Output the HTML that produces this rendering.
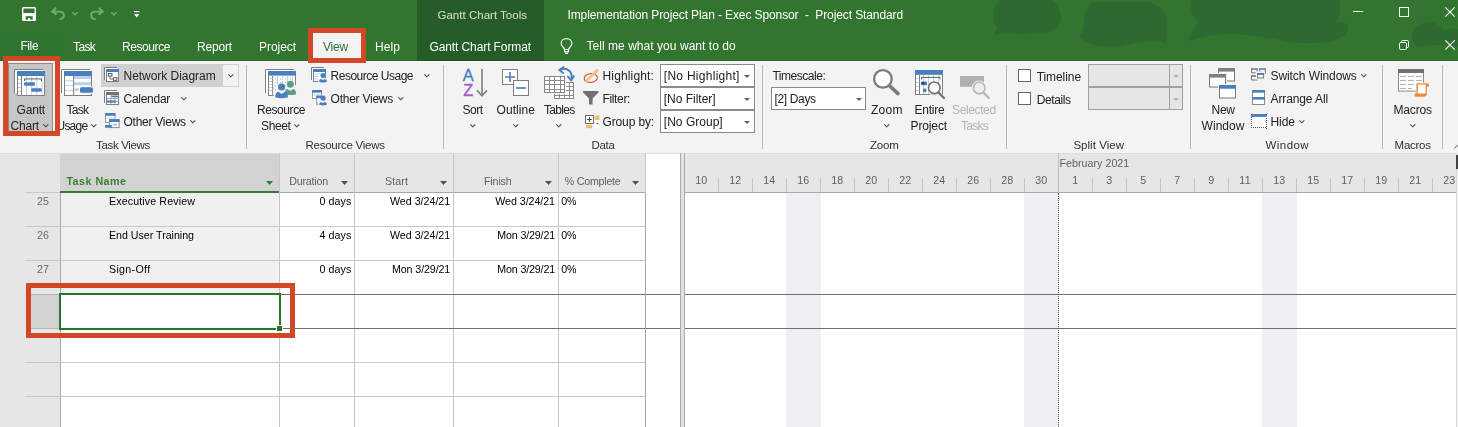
<!DOCTYPE html>
<html><head><meta charset="utf-8"><title>Project</title>
<style>
html,body{margin:0;padding:0}
body{width:1458px;height:427px;overflow:hidden;position:relative;background:#fff;font-family:"Liberation Sans",sans-serif}
.t{position:absolute;white-space:pre;font-family:"Liberation Sans",sans-serif}
#tx{position:absolute;left:0;top:0;width:1458px;height:427px;will-change:transform}
.b{position:absolute;box-sizing:border-box}
svg{position:absolute;overflow:visible}
</style></head><body>
<div class="b" style="left:0px;top:0px;width:1458px;height:61px;background:#31752f;"></div>
<div class="b" style="left:0px;top:31px;width:58px;height:30px;background:#2f7430;"></div>
<div class="b" style="left:417px;top:0px;width:127px;height:61px;background:#265c27;"></div>
<div class="b" style="left:0px;top:61px;width:1458px;height:92px;background:#f3f3f3;"></div>
<div class="b" style="left:0px;top:60px;width:1458px;height:1px;background:#2a6c28;"></div>
<div class="b" style="left:417px;top:60px;width:127px;height:1px;background:#215423;"></div>
<div class="b" style="left:0px;top:61px;width:1458px;height:1px;background:#fbfbfb;"></div>
<div class="b" style="left:0px;top:152px;width:1458px;height:1px;background:#f3f3f3;"></div>
<div class="b" style="left:313px;top:33px;width:48px;height:28px;background:#f3f3f3;"></div>
<div class="b" style="left:0px;top:153px;width:1458px;height:274px;background:#ffffff;"></div>
<div class="b" style="left:0px;top:153px;width:60px;height:274px;background:#e6e6e6;"></div>
<div class="b" style="left:60px;top:153px;width:586px;height:39px;background:#e6e6e6;"></div>
<div class="b" style="left:60px;top:153px;width:220px;height:39px;background:#d2d2d2;"></div>
<div class="b" style="left:60px;top:191px;width:220px;height:2px;background:#2e7d32;"></div>
<div class="b" style="left:60px;top:193px;width:220px;height:101px;background:#f0f0f0;"></div>
<div class="b" style="left:685px;top:153px;width:771px;height:39px;background:#e6e6e6;"></div>
<div class="b" style="left:279px;top:192px;width:1177px;height:1px;background:#a8a8a8;"></div>
<div class="b" style="left:25px;top:192px;width:35px;height:1px;background:#c8c8c8;"></div>
<div class="b" style="left:0px;top:153px;width:1458px;height:1px;background:#dcdcdc;"></div>
<div class="b" style="left:786px;top:193px;width:35px;height:234px;background:#edf0f5;"></div>
<div class="b" style="left:1024px;top:193px;width:35px;height:234px;background:#edf0f5;"></div>
<div class="b" style="left:1262px;top:193px;width:35px;height:234px;background:#edf0f5;"></div>
<div class="b" style="left:279px;top:153px;width:1px;height:274px;background:#c6c6c6;"></div>
<div class="b" style="left:354px;top:153px;width:1px;height:274px;background:#c6c6c6;"></div>
<div class="b" style="left:453px;top:153px;width:1px;height:274px;background:#c6c6c6;"></div>
<div class="b" style="left:558px;top:153px;width:1px;height:274px;background:#c6c6c6;"></div>
<div class="b" style="left:645px;top:153px;width:1px;height:274px;background:#c6c6c6;"></div>
<div class="b" style="left:60px;top:193px;width:1px;height:234px;background:#a8a8a8;"></div>
<div class="b" style="left:25px;top:226px;width:621px;height:1px;background:#c8c8c8;"></div>
<div class="b" style="left:25px;top:260px;width:621px;height:1px;background:#c8c8c8;"></div>
<div class="b" style="left:25px;top:362px;width:621px;height:1px;background:#c8c8c8;"></div>
<div class="b" style="left:25px;top:396px;width:621px;height:1px;background:#c8c8c8;"></div>
<div class="b" style="left:61px;top:294px;width:1395px;height:1px;background:#6e6e6e;"></div>
<div class="b" style="left:61px;top:328px;width:1395px;height:1px;background:#6e6e6e;"></div>
<div class="b" style="left:27px;top:294px;width:33px;height:1px;background:#b4b4b4;"></div>
<div class="b" style="left:27px;top:328px;width:33px;height:1px;background:#b4b4b4;"></div>
<div class="b" style="left:31px;top:295px;width:29px;height:33px;background:#d2d2d2;"></div>
<div class="b" style="left:680px;top:153px;width:5px;height:274px;background:#e2e2e2;border-left:1px solid #ababab;border-right:1px solid #ababab;"></div>
<div class="b" style="left:646px;top:154px;width:34px;height:273px;background:#ffffff;"></div>
<div class="b" style="left:645px;top:193px;width:1px;height:234px;background:#a6a6a6;"></div>
<div class="b" style="left:646px;top:294px;width:34px;height:1px;background:#6e6e6e;"></div>
<div class="b" style="left:646px;top:328px;width:34px;height:1px;background:#6e6e6e;"></div>
<div class="b" style="left:718px;top:178px;width:1px;height:14px;background:#c4c4c4;"></div>
<div class="b" style="left:752px;top:178px;width:1px;height:14px;background:#c4c4c4;"></div>
<div class="b" style="left:786px;top:178px;width:1px;height:14px;background:#c4c4c4;"></div>
<div class="b" style="left:820px;top:178px;width:1px;height:14px;background:#c4c4c4;"></div>
<div class="b" style="left:854px;top:178px;width:1px;height:14px;background:#c4c4c4;"></div>
<div class="b" style="left:888px;top:178px;width:1px;height:14px;background:#c4c4c4;"></div>
<div class="b" style="left:922px;top:178px;width:1px;height:14px;background:#c4c4c4;"></div>
<div class="b" style="left:956px;top:178px;width:1px;height:14px;background:#c4c4c4;"></div>
<div class="b" style="left:990px;top:178px;width:1px;height:14px;background:#c4c4c4;"></div>
<div class="b" style="left:1024px;top:178px;width:1px;height:14px;background:#c4c4c4;"></div>
<div class="b" style="left:1092px;top:178px;width:1px;height:14px;background:#c4c4c4;"></div>
<div class="b" style="left:1126px;top:178px;width:1px;height:14px;background:#c4c4c4;"></div>
<div class="b" style="left:1160px;top:178px;width:1px;height:14px;background:#c4c4c4;"></div>
<div class="b" style="left:1194px;top:178px;width:1px;height:14px;background:#c4c4c4;"></div>
<div class="b" style="left:1228px;top:178px;width:1px;height:14px;background:#c4c4c4;"></div>
<div class="b" style="left:1262px;top:178px;width:1px;height:14px;background:#c4c4c4;"></div>
<div class="b" style="left:1296px;top:178px;width:1px;height:14px;background:#c4c4c4;"></div>
<div class="b" style="left:1330px;top:178px;width:1px;height:14px;background:#c4c4c4;"></div>
<div class="b" style="left:1364px;top:178px;width:1px;height:14px;background:#c4c4c4;"></div>
<div class="b" style="left:1398px;top:178px;width:1px;height:14px;background:#c4c4c4;"></div>
<div class="b" style="left:1432px;top:178px;width:1px;height:14px;background:#c4c4c4;"></div>
<div class="b" style="left:1058px;top:153px;width:1px;height:40px;background:#bcbcbc;"></div>
<div class="b" style="left:1058px;top:193px;width:0px;height:234px;border-left:1px dotted #555;"></div>
<div class="b" style="left:1456px;top:153px;width:1px;height:274px;background:#d8d8d8;"></div>
<div class="b" style="left:1457px;top:153px;width:1px;height:274px;background:#f3f3f3;"></div>
<div class="b" style="left:1456px;top:155px;width:2px;height:14px;background:#444;"></div>
<div class="b" style="left:59px;top:293px;width:222px;height:37px;border:2px solid #27752b;background:#fff;"></div>
<div class="b" style="left:277px;top:326px;width:5px;height:5px;background:#27752b;border:1px solid #fff;box-sizing:content-box;left:276px;top:325px;"></div>
<div class="b" style="left:245px;top:65px;width:3px;height:84px;background:#f8f8f8;"></div>
<div class="b" style="left:246px;top:65px;width:1px;height:84px;background:#b4b4b4;"></div>
<div class="b" style="left:442px;top:65px;width:3px;height:84px;background:#f8f8f8;"></div>
<div class="b" style="left:443px;top:65px;width:1px;height:84px;background:#b4b4b4;"></div>
<div class="b" style="left:761px;top:65px;width:3px;height:84px;background:#f8f8f8;"></div>
<div class="b" style="left:762px;top:65px;width:1px;height:84px;background:#b4b4b4;"></div>
<div class="b" style="left:1005px;top:65px;width:3px;height:84px;background:#f8f8f8;"></div>
<div class="b" style="left:1006px;top:65px;width:1px;height:84px;background:#b4b4b4;"></div>
<div class="b" style="left:1189px;top:65px;width:3px;height:84px;background:#f8f8f8;"></div>
<div class="b" style="left:1190px;top:65px;width:1px;height:84px;background:#b4b4b4;"></div>
<div class="b" style="left:1381px;top:65px;width:3px;height:84px;background:#f8f8f8;"></div>
<div class="b" style="left:1382px;top:65px;width:1px;height:84px;background:#b4b4b4;"></div>
<div class="b" style="left:1441px;top:65px;width:3px;height:84px;background:#f8f8f8;"></div>
<div class="b" style="left:1442px;top:65px;width:1px;height:84px;background:#b4b4b4;"></div>
<div class="b" style="left:8px;top:63px;width:45px;height:68px;background:#c6c6c6;border:1px solid #8c8c8c;border-bottom:none;"></div>
<div class="b" style="left:101px;top:64px;width:122px;height:23px;background:#d0d0d0;"></div>
<div class="b" style="left:222px;top:64px;width:17px;height:23px;background:#f2f2f2;border:1px solid #d0d0d0;"></div>
<div class="b" style="left:660px;top:64px;width:95px;height:23px;background:#fff;border:1px solid #8a8a8a;"></div>
<div class="b" style="left:660px;top:87px;width:95px;height:23px;background:#fff;border:1px solid #8a8a8a;"></div>
<div class="b" style="left:660px;top:110px;width:95px;height:23px;background:#fff;border:1px solid #8a8a8a;"></div>
<div class="b" style="left:771px;top:87px;width:95px;height:23px;background:#fff;border:1px solid #8a8a8a;"></div>
<div class="b" style="left:1088px;top:64px;width:95px;height:23px;background:#e6e6e6;border:1px solid #a0a0a0;"></div>
<div class="b" style="left:1169px;top:65px;width:1px;height:21px;background:#a0a0a0;"></div>
<div class="b" style="left:1088px;top:87px;width:95px;height:23px;background:#e6e6e6;border:1px solid #a0a0a0;"></div>
<div class="b" style="left:1169px;top:88px;width:1px;height:21px;background:#a0a0a0;"></div>
<div class="b" style="left:1018px;top:69px;width:13px;height:13px;background:#fff;border:1px solid #666;"></div>
<div class="b" style="left:1018px;top:92px;width:13px;height:13px;background:#fff;border:1px solid #666;"></div>
<svg style="left:0;top:0" width="1458" height="61" viewBox="0 0 1458 61"><defs><filter id="bl" x="-5%" y="-20%" width="110%" height="140%"><feGaussianBlur stdDeviation="0.7"/></filter></defs><g fill="#2e6930" filter="url(#bl)"><path d="M1000 0 H1052 Q1062 8 1061 20 Q1058 32 1040 33 Q1020 35 1008 33 Q1000 33 993 35 L997 27 Q992 20 994 12 Q995 4 1000 0 Z"/><path d="M1092 2 H1150 Q1166 8 1167 22 Q1168 34 1166 45 L1160 40 Q1140 42 1120 46 Q1098 48 1086 42 Q1078 38 1080 34 Q1084 30 1084 22 Q1084 8 1092 2 Z"/><path d="M1192 0 H1340 Q1341 12 1337 22 Q1346 22 1349 26 Q1348 36 1332 41 Q1310 45 1290 42 Q1262 36 1236 34 Q1210 33 1189 41 L1190 36 L1198 22 Q1188 12 1192 0 Z"/><path d="M1458 29 Q1450 27 1444 31 Q1438 21 1426 22.5 Q1413 25 1412 36 Q1412 44 1420 46.5 Q1432 44.5 1440 45 Q1450 46 1458 46.5 Z"/></g></svg>
<svg style="left:22px;top:7px" width="14" height="14" viewBox="0 0 14 14"><rect x="0.7" y="0.7" width="12.6" height="12.6" rx="0.8" fill="none" stroke="#fff" stroke-width="1.4"/><rect x="1" y="6" width="12" height="7.3" fill="#fff"/><rect x="3.7" y="9.2" width="7" height="3.5" fill="#31752f"/><rect x="6.2" y="11" width="2" height="2.3" fill="#fff"/></svg>
<svg style="left:51px;top:7px" width="14" height="13" viewBox="0 0 14 13"><path d="M5.2 0.8 L1.2 4.6 L5.6 7.6" fill="none" stroke="#74aa72" stroke-width="1.9"/><path d="M1.8 4.6 H9 Q13.2 5 13 8.6 Q12.6 11.8 8.4 12.4" fill="none" stroke="#74aa72" stroke-width="1.9"/></svg>
<svg style="left:72.2px;top:11.65px" width="5.8" height="3.1" viewBox="0 0 5.8 3.1"><path d="M0.3 0.3 L2.9 2.8 L5.5 0.3" fill="none" stroke="#74aa72" stroke-width="1.5"/></svg>
<svg style="left:90px;top:7px" width="14" height="13" viewBox="0 0 14 13"><path d="M8.8 0.8 L12.8 4.6 L8.4 7.6" fill="none" stroke="#74aa72" stroke-width="1.9"/><path d="M12.2 4.6 H5 Q0.8 5 1 8.6 Q1.4 11.8 5.6 12.4" fill="none" stroke="#74aa72" stroke-width="1.9"/></svg>
<svg style="left:111px;top:11.65px" width="5.8" height="3.1" viewBox="0 0 5.8 3.1"><path d="M0.3 0.3 L2.9 2.8 L5.5 0.3" fill="none" stroke="#74aa72" stroke-width="1.5"/></svg>
<svg style="left:134px;top:11px" width="5.4" height="6.4" viewBox="0 0 5.4 6.4"><rect x="0" y="0" width="5.4" height="1.2" fill="#fff"/><path d="M0 3 H5.4 L2.7 6.4 Z" fill="#fff"/></svg>
<svg style="left:1353px;top:11px" width="10" height="1" viewBox="0 0 10 1"><rect width="10" height="1" fill="#fff"/></svg>
<svg style="left:1399px;top:7px" width="10" height="10" viewBox="0 0 10 10"><rect x="0.5" y="0.5" width="9" height="9" fill="none" stroke="#fff" stroke-width="1"/></svg>
<svg style="left:1445px;top:7px" width="10" height="10" viewBox="0 0 10 10"><path d="M0.3 0.3 L9.7 9.7 M9.7 0.3 L0.3 9.7" stroke="#fff" stroke-width="1.1"/></svg>
<svg style="left:1399px;top:40px" width="10" height="10" viewBox="0 0 10 10"><rect x="0.5" y="2.5" width="7" height="7" rx="1.2" fill="none" stroke="#fff" stroke-width="1"/><path d="M2.5 2.2 V1.6 Q2.5 0.5 3.6 0.5 H8.4 Q9.5 0.5 9.5 1.6 V6.4 Q9.5 7.5 8.4 7.5 H7.8" fill="none" stroke="#fff" stroke-width="1"/></svg>
<svg style="left:1445px;top:40px" width="10" height="10" viewBox="0 0 10 10"><path d="M0.3 0.3 L9.7 9.7 M9.7 0.3 L0.3 9.7" stroke="#fff" stroke-width="1.1"/></svg>
<svg style="left:560px;top:38px" width="13" height="16" viewBox="0 0 13 16"><path d="M4.5 11.5 C4.5 9.3 1.1 8.5 1.1 5.6 C1.1 2.6 3.5 0.6 6.5 0.6 C9.5 0.6 11.9 2.6 11.9 5.6 C11.9 8.5 8.6 9.3 8.6 11.5 Z" fill="none" stroke="#fff" stroke-width="1.15"/><path d="M4.5 11.5 V13.6 H8.6 V11.5 M5 15.4 H8.1" fill="none" stroke="#fff" stroke-width="1.1"/></svg>
<svg style="left:14px;top:69px" width="31" height="27" viewBox="0 0 31 27"><path d="M0.5 24 V0.5 H29" fill="none" stroke="#7f7f7f" stroke-width="1"/><rect x="1" y="1" width="28" height="23" fill="#fff"/><rect x="3.5" y="2.5" width="27" height="24" fill="#fff" stroke="#7f7f7f" stroke-width="1"/><rect x="3" y="2" width="28" height="5" fill="#4a7fbe"/><g transform="translate(3,2)"><path d="M1 8.5 H4.5" stroke="#bcd0e8" stroke-width="1"/><path d="M1 12.5 H4.5" stroke="#bcd0e8" stroke-width="1"/><path d="M1 16.5 H4.5" stroke="#bcd0e8" stroke-width="1"/><path d="M1 20.5 H4.5" stroke="#bcd0e8" stroke-width="1"/><path d="M9.5 5 V24" stroke="#bcd0e8" stroke-width="1"/><path d="M14.7 5 V24" stroke="#bcd0e8" stroke-width="1"/><path d="M19.8 5 V24" stroke="#bcd0e8" stroke-width="1"/><path d="M25 5 V24" stroke="#bcd0e8" stroke-width="1"/><path d="M4.5 5 V24" stroke="#7f7f7f" stroke-width="1"/><path d="M7.5 10 V7.9 H24.5 V10" fill="none" stroke="#5a5a5a" stroke-width="1"/><rect x="7" y="11.2" width="11" height="3.6" rx="1.2" fill="#4a7fbe"/><rect x="14.2" y="17.2" width="10.6" height="3.6" rx="1.2" fill="#4a7fbe"/></g></svg>
<svg style="left:61px;top:69px" width="31" height="27" viewBox="0 0 31 27"><path d="M0.5 24 V0.5 H29" fill="none" stroke="#7f7f7f" stroke-width="1"/><rect x="1" y="1" width="28" height="23" fill="#fff"/><rect x="3.5" y="2.5" width="27" height="24" fill="#fff" stroke="#7f7f7f" stroke-width="1"/><rect x="3" y="2" width="28" height="5" fill="#4a7fbe"/><g transform="translate(3,2)"><path d="M1 9.8 H9" stroke="#bcd0e8" stroke-width="1"/><path d="M1 14.5 H9" stroke="#bcd0e8" stroke-width="1"/><path d="M1 19.5 H9" stroke="#bcd0e8" stroke-width="1"/><rect x="10" y="5" width="17" height="3" fill="#bcd0e8"/><rect x="10" y="11.2" width="17" height="3" fill="#bcd0e8"/><rect x="10.3" y="17.3" width="4.5" height="2.7" fill="#bcd0e8"/><path d="M9.6 5 V24" stroke="#7f7f7f" stroke-width="1"/><rect x="15.6" y="15.4" width="13.6" height="7.4" fill="#f3f3f3"/><rect x="16" y="16.2" width="13" height="5.6" rx="1.5" fill="#4a7fbe"/></g></svg>
<svg style="left:104px;top:67px" width="15" height="15" viewBox="0 0 15 15"><path d="M0.5 13 V0.5 H13" fill="none" stroke="#7f7f7f" stroke-width="1"/><rect x="1" y="1" width="12" height="12" fill="#fff"/><rect x="2.5" y="2.5" width="12" height="12" fill="#fff" stroke="#7f7f7f" stroke-width="1"/><rect x="2" y="2" width="13" height="3" fill="#4a7fbe"/><g transform="translate(2,2)"><rect x="2.3" y="4.5" width="3.6" height="2.6" fill="#fff" stroke="#5a5a5a" stroke-width="1"/><rect x="7.3" y="8.7" width="3.6" height="2.6" fill="#fff" stroke="#5a5a5a" stroke-width="1"/><path d="M4 7.2 V10 H7" fill="none" stroke="#5a5a5a" stroke-width="0.9"/></g></svg>
<svg style="left:104px;top:90px" width="15" height="15" viewBox="0 0 15 15"><path d="M0.5 13 V0.5 H13" fill="none" stroke="#7f7f7f" stroke-width="1"/><rect x="1" y="1" width="12" height="12" fill="#fff"/><rect x="2.5" y="2.5" width="12" height="12" fill="#fff" stroke="#7f7f7f" stroke-width="1"/><rect x="2" y="2" width="13" height="3" fill="#727272"/><g transform="translate(2,2)"><path d="M5 3 V12 M9 3 V12 M1 6.5 H12 M1 9.5 H12" stroke="#9a9a9a" stroke-width="0.9" fill="none"/><rect x="5.5" y="3.6" width="7" height="1.6" fill="#4a7fbe"/><rect x="0.8" y="8.4" width="8.8" height="2.2" fill="#4a7fbe"/></g></svg>
<svg style="left:105px;top:113px" width="15" height="16" viewBox="0 0 15 16"><rect x="0.5" y="0.5" width="9.5" height="9" fill="#fff" stroke="#9a9a9a" stroke-width="1"/><rect x="0" y="0" width="10.5" height="2.8" fill="#4a7fbe"/><path d="M1.5 5 H9" stroke="#bcd0e8" stroke-width="1"/><rect x="4.6" y="6.6" width="9.5" height="8" fill="#fff" stroke="#8a8a8a" stroke-width="1"/><rect x="4.1" y="6.1" width="10.5" height="2.9" fill="#4a7fbe"/><rect x="7.5" y="10.5" width="4.5" height="2.5" fill="#bcd0e8"/><rect x="0" y="12" width="6.8" height="2.7" fill="#4a7fbe"/></svg>
<svg style="left:265px;top:69px" width="31" height="27" viewBox="0 0 31 27"><path d="M0.5 24 V0.5 H29" fill="none" stroke="#7f7f7f" stroke-width="1"/><rect x="1" y="1" width="28" height="23" fill="#fff"/><rect x="3.5" y="2.5" width="27" height="24" fill="#fff" stroke="#7f7f7f" stroke-width="1"/><rect x="3" y="2" width="28" height="4.6" fill="#4a7fbe"/><g transform="translate(3,2)"><path d="M1 7.5 H4.5" stroke="#bcd0e8" stroke-width="1"/><path d="M1 10.5 H4.5" stroke="#bcd0e8" stroke-width="1"/><path d="M1 13.5 H4.5" stroke="#bcd0e8" stroke-width="1"/><path d="M1 16.5 H4.5" stroke="#bcd0e8" stroke-width="1"/><path d="M1 19.5 H4.5" stroke="#bcd0e8" stroke-width="1"/><path d="M9.5 5 V14" stroke="#bcd0e8" stroke-width="1"/><path d="M14.5 5 V14" stroke="#bcd0e8" stroke-width="1"/><path d="M19.5 5 V14" stroke="#bcd0e8" stroke-width="1"/><path d="M24.5 5 V14" stroke="#bcd0e8" stroke-width="1"/><rect x="7" y="7.5" width="0.9" height="0.9" fill="#8a8a8a"/><rect x="7" y="11" width="0.9" height="0.9" fill="#8a8a8a"/><rect x="7" y="14.5" width="0.9" height="0.9" fill="#8a8a8a"/><rect x="7" y="18.5" width="0.9" height="0.9" fill="#8a8a8a"/><rect x="12" y="7.5" width="0.9" height="0.9" fill="#8a8a8a"/><rect x="12" y="11" width="0.9" height="0.9" fill="#8a8a8a"/><rect x="12" y="14.5" width="0.9" height="0.9" fill="#8a8a8a"/><rect x="12" y="18.5" width="0.9" height="0.9" fill="#8a8a8a"/><rect x="17" y="7.5" width="0.9" height="0.9" fill="#8a8a8a"/><rect x="17" y="11" width="0.9" height="0.9" fill="#8a8a8a"/><rect x="17" y="14.5" width="0.9" height="0.9" fill="#8a8a8a"/><rect x="17" y="18.5" width="0.9" height="0.9" fill="#8a8a8a"/><rect x="22" y="7.5" width="0.9" height="0.9" fill="#8a8a8a"/><rect x="22" y="11" width="0.9" height="0.9" fill="#8a8a8a"/><rect x="22" y="14.5" width="0.9" height="0.9" fill="#8a8a8a"/><rect x="22" y="18.5" width="0.9" height="0.9" fill="#8a8a8a"/><path d="M4.7 5 V24" stroke="#7f7f7f" stroke-width="1"/><rect x="6" y="12" width="23" height="15" fill="#fff" opacity="0"/></g></svg>
<svg style="left:268px;top:71px" width="30" height="28" viewBox="0 0 30 28"><rect x="5.5" y="19" width="23.5" height="7" fill="#f3f3f3"/><rect x="26.5" y="14" width="3" height="6" fill="#f3f3f3"/><circle cx="22.4" cy="13.2" r="3.5" fill="#5b9e84"/><path d="M16.65 23.5 Q16.65 18.3 19.525 17.9 L22.4 20.09 L25.275 17.9 Q28.15 18.3 28.15 23.5 L27.35 23.5 Q22.4 24.7 17.45 23.5 Z" fill="#5b9e84"/><circle cx="13.6" cy="16" r="3.6" fill="#4a7fbe"/><path d="M7.2 26.6 Q7.2 21.2 10.4 20.8 L13.6 23.08 L16.8 20.8 Q20 21.2 20 26.6 L19.2 26.6 Q13.6 27.8 8 26.6 Z" fill="#4a7fbe"/></svg>
<svg style="left:311px;top:67px" width="15" height="15" viewBox="0 0 15 15"><path d="M0.5 13 V0.5 H13" fill="none" stroke="#7f7f7f" stroke-width="1"/><rect x="1" y="1" width="12" height="12" fill="#fff"/><rect x="2.5" y="2.5" width="12" height="12" fill="#fff" stroke="#7f7f7f" stroke-width="1"/><rect x="2" y="2" width="13" height="3" fill="#4a7fbe"/><g transform="translate(2,2)"><path d="M1.5 5 H8 M1.5 7.5 H6 M1.5 10 H5" stroke="#bcd0e8" stroke-width="1"/></g></svg>
<svg style="left:317px;top:71px" width="12" height="13" viewBox="0 0 12 13"><rect x="1.2" y="7" width="9.6" height="5" fill="#f3f3f3"/><circle cx="6" cy="4.4" r="2.5" fill="#4a7fbe"/><path d="M2 10.9 Q2 8.5 4 8.1 L6 9.03 L8 8.1 Q10 8.5 10 10.9 L9.2 10.9 Q6 12.1 2.8 10.9 Z" fill="#4a7fbe"/></svg>
<svg style="left:312px;top:90px" width="16" height="16" viewBox="0 0 16 16"><rect x="0.5" y="0.5" width="9" height="8" fill="#fff" stroke="#9a9a9a" stroke-width="1"/><rect x="0" y="0" width="10" height="2.7" fill="#4a7fbe"/><path d="M1.5 4.6 H8.5" stroke="#bcd0e8" stroke-width="1"/><rect x="4.7" y="6.2" width="8" height="8" fill="#fff" stroke="#8a8a8a" stroke-width="1"/><rect x="4.2" y="5.7" width="5" height="2.5" fill="#4a7fbe"/><rect x="6.2" y="10.5" width="9.6" height="5" fill="#f3f3f3"/><circle cx="11" cy="8.3" r="2.5" fill="#4a7fbe"/><path d="M7 14.8 Q7 12.4 9 12 L11 12.93 L13 12 Q15 12.4 15 14.8 L14.2 14.8 Q11 16 7.8 14.8 Z" fill="#4a7fbe"/></svg>
<svg style="left:463px;top:69px" width="25" height="28" viewBox="0 0 25 28"><text x="-0.2" y="11.9" font-family="Liberation Sans, sans-serif" font-size="16.4" fill="#4a7fbe" stroke="#4a7fbe" stroke-width="0.35">A</text><text x="0.3" y="27.4" font-family="Liberation Sans, sans-serif" font-size="16.4" fill="#9a5fc0" stroke="#9a5fc0" stroke-width="0.35">Z</text><path d="M19 0 V26.4 M14 21.4 L19 26.8 L24 21.4" fill="none" stroke="#7f7f7f" stroke-width="1.6"/></svg>
<svg style="left:502px;top:69px" width="27" height="27" viewBox="0 0 27 27"><rect x="0.5" y="0.5" width="15" height="15" fill="#fff" stroke="#7f7f7f" stroke-width="1"/><path d="M3 8 H13 M8 3 V13" stroke="#4a7fbe" stroke-width="1.6"/><rect x="11.5" y="11.5" width="15" height="15" fill="#fff" stroke="#7f7f7f" stroke-width="1"/><path d="M14 19 H24" stroke="#4a7fbe" stroke-width="1.6"/></svg>
<svg style="left:544px;top:66px" width="31" height="33" viewBox="0 0 31 33"><rect x="10.5" y="16.5" width="19" height="16" fill="#fff" stroke="#8a8a8a" stroke-width="1"/><path d="M15.5 16 V33" stroke="#8a8a8a" stroke-width="1"/><path d="M20.5 16 V33" stroke="#8a8a8a" stroke-width="1"/><path d="M25.5 16 V33" stroke="#8a8a8a" stroke-width="1"/><path d="M10 20.5 H30" stroke="#8a8a8a" stroke-width="1"/><path d="M10 24.5 H30" stroke="#8a8a8a" stroke-width="1"/><path d="M10 29.5 H30" stroke="#8a8a8a" stroke-width="1"/><rect x="-1" y="9" width="23" height="19" fill="#f3f3f3"/><rect x="0.5" y="10.5" width="20" height="16" fill="#fff" stroke="#8a8a8a" stroke-width="1"/><path d="M5.5 10 V27" stroke="#8a8a8a" stroke-width="1"/><path d="M10.5 10 V27" stroke="#8a8a8a" stroke-width="1"/><path d="M16.5 10 V27" stroke="#8a8a8a" stroke-width="1"/><path d="M0 14.5 H21" stroke="#8a8a8a" stroke-width="1"/><path d="M0 18.5 H21" stroke="#8a8a8a" stroke-width="1"/><path d="M0 23.5 H21" stroke="#8a8a8a" stroke-width="1"/><path d="M16 4 Q22 0.8 26.2 5.6 Q28.4 9 27.4 13" fill="none" stroke="#4a7fbe" stroke-width="1.9"/><path d="M23.4 10 L27.2 14.4 L30.2 9.6" fill="none" stroke="#4a7fbe" stroke-width="1.9"/><path d="M20 0.8 L15.4 4 L19.8 7.4" fill="none" stroke="#4a7fbe" stroke-width="1.9"/></svg>
<svg style="left:583px;top:67px" width="17" height="17" viewBox="0 0 17 17"><ellipse cx="7.8" cy="11" rx="6.6" ry="4.4" fill="none" stroke="#d8593b" stroke-width="1.2" transform="rotate(-8 7.8 11)"/><path d="M2.2 13.6 L13.6 1.6 L16 3.8 L4.6 14.6 L1.6 15.2 Z" fill="#efc67a"/></svg>
<svg style="left:583px;top:91px" width="16" height="15" viewBox="0 0 16 15"><path d="M0 0 H15.6 V1.2 L9.6 7.4 V13.6 H6 V7.4 L0 1.2 Z" fill="#707070"/></svg>
<svg style="left:585px;top:115px" width="15" height="14" viewBox="0 0 15 14"><rect x="0.5" y="0.5" width="8" height="8" fill="#fff" stroke="#6a6a6a" stroke-width="1"/><path d="M2.2 4.5 H6.8 M4.5 2.2 V6.8" stroke="#444" stroke-width="1"/><rect x="10" y="0.5" width="4.4" height="4.4" fill="#f0bd62"/><rect x="10" y="5" width="4.4" height="8" fill="#fff"/><path d="M11.4 8.6 H13.4" stroke="#444" stroke-width="1"/><rect x="1" y="9.8" width="6.2" height="3.4" fill="#f0bd62"/></svg>
<svg style="left:872px;top:68px" width="30" height="30" viewBox="0 0 30 30"><circle cx="10.9" cy="10.9" r="8.8" fill="#fff" stroke="#7c7c7c" stroke-width="2.3"/><path d="M17.8 18 L26 25.6" stroke="#7c7c7c" stroke-width="3.7" stroke-linecap="round"/></svg>
<svg style="left:915px;top:70px" width="28" height="25" viewBox="0 0 28 25"><rect x="0.5" y="0.5" width="27" height="24" fill="#fff" stroke="#7f7f7f" stroke-width="1"/><rect x="0" y="0" width="28" height="4.8" fill="#4a7fbe"/><g transform="translate(0,0)"><path d="M1 8.5 H3.6" stroke="#bcd0e8" stroke-width="1"/><path d="M1 12.5 H3.6" stroke="#bcd0e8" stroke-width="1"/><path d="M1 16.5 H3.6" stroke="#bcd0e8" stroke-width="1"/><path d="M1 20.5 H3.6" stroke="#bcd0e8" stroke-width="1"/><path d="M8.5 5 V24" stroke="#bcd0e8" stroke-width="1"/><path d="M13.5 5 V24" stroke="#bcd0e8" stroke-width="1"/><path d="M18.5 5 V24" stroke="#bcd0e8" stroke-width="1"/><path d="M23.5 5 V24" stroke="#bcd0e8" stroke-width="1"/><path d="M4.5 5 V24" stroke="#7f7f7f" stroke-width="1"/><path d="M6.5 9.4 V7.4 H25 V9.4" fill="none" stroke="#5a5a5a" stroke-width="1"/><rect x="6" y="11.6" width="6" height="3.6" rx="1" fill="#4a7fbe"/><path d="M6.4 13.2 H9.6" stroke="#222" stroke-width="1.2"/><rect x="8" y="18.6" width="3.4" height="3.6" rx="1" fill="#4a7fbe"/></g></svg>
<svg style="left:926px;top:80px" width="20" height="20" viewBox="0 0 20 20"><rect x="4" y="14.2" width="13.6" height="2" fill="#f3f3f3"/><rect x="16.6" y="14" width="2" height="2" fill="#f3f3f3"/><circle cx="8.3" cy="7.8" r="5.8" fill="#fff" stroke="#747474" stroke-width="1.7"/><path d="M12.8 12.6 L18 18" stroke="#747474" stroke-width="2.4" stroke-linecap="round"/></svg>
<svg style="left:960px;top:76px" width="31" height="24" viewBox="0 0 31 24"><rect x="0" y="0" width="24" height="10.8" fill="#b1afb1"/><circle cx="19.2" cy="12" r="7.6" fill="#f3f3f3"/><circle cx="19.2" cy="12" r="5.8" fill="#f2ecf2" stroke="#b8b8b8" stroke-width="1.7"/><path d="M23.7 16.8 L28.8 22" stroke="#b8b8b8" stroke-width="2.4" stroke-linecap="round"/></svg>
<svg style="left:1209px;top:68px" width="28" height="31" viewBox="0 0 28 31"><rect x="9.5" y="0.5" width="16" height="12.5" fill="#fff" stroke="#777" stroke-width="1"/><rect x="9" y="0" width="17" height="3.6" fill="#808080"/><rect x="-1" y="5" width="19" height="15.5" fill="#f3f3f3"/><rect x="0.5" y="6.5" width="16" height="12.5" fill="#fff" stroke="#777" stroke-width="1"/><rect x="0" y="6" width="17" height="3.6" fill="#808080"/><rect x="9" y="16" width="19" height="15.5" fill="#f3f3f3"/><rect x="10.5" y="17.5" width="16" height="12.5" fill="#fff" stroke="#777" stroke-width="1"/><rect x="10" y="17" width="17" height="3.7" fill="#4a7fbe"/></svg>
<svg style="left:1251px;top:68px" width="15" height="13" viewBox="0 0 15 13"><path d="M0 1 H6.6 M8.3 1 H14.8" stroke="#777" stroke-width="1.6"/><path d="M0.5 0.4 V4.8 H4.6 M8.8 0.4 V3.6 M14.3 0.4 V5.8 M6.1 0.4 V3.4" fill="none" stroke="#777" stroke-width="1"/><path d="M0 8 H5" stroke="#777" stroke-width="1.6"/><path d="M0.5 7.4 V12 H6.6" fill="none" stroke="#777" stroke-width="1"/><rect x="5.2" y="4.2" width="8.8" height="7.1" fill="#f3f3f3"/><rect x="6.6" y="5.6" width="6" height="4.3" fill="#fff" stroke="#777" stroke-width="1"/><rect x="6.1" y="5.1" width="7" height="1.8" fill="#4a7fbe"/></svg>
<svg style="left:1252px;top:90px" width="13" height="15" viewBox="0 0 13 15"><rect x="0.5" y="0.5" width="12" height="14" fill="#fff" stroke="#8a8a8a" stroke-width="1"/><rect x="0" y="0" width="13" height="2.7" fill="#4a7fbe"/><rect x="0" y="7" width="13" height="2.6" fill="#4a7fbe"/></svg>
<svg style="left:1251px;top:114px" width="16" height="14" viewBox="0 0 16 14"><rect x="0" y="2" width="16" height="12" fill="#fff"/><rect x="0" y="3" width="1" height="1" fill="#555"/><rect x="15" y="4" width="1" height="1" fill="#555"/><rect x="0" y="5" width="1" height="1" fill="#555"/><rect x="15" y="6" width="1" height="1" fill="#555"/><rect x="0" y="7" width="1" height="1" fill="#555"/><rect x="15" y="8" width="1" height="1" fill="#555"/><rect x="0" y="9" width="1" height="1" fill="#555"/><rect x="15" y="10" width="1" height="1" fill="#555"/><rect x="0" y="11" width="1" height="1" fill="#555"/><rect x="15" y="12" width="1" height="1" fill="#555"/><rect x="0" y="13" width="1" height="1" fill="#555"/><rect x="15" y="14" width="1" height="1" fill="#555"/><rect x="0" y="13" width="1" height="1" fill="#555"/><rect x="2" y="13" width="1" height="1" fill="#555"/><rect x="4" y="13" width="1" height="1" fill="#555"/><rect x="6" y="13" width="1" height="1" fill="#555"/><rect x="8" y="13" width="1" height="1" fill="#555"/><rect x="10" y="13" width="1" height="1" fill="#555"/><rect x="12" y="13" width="1" height="1" fill="#555"/><rect x="14" y="13" width="1" height="1" fill="#555"/><rect x="0" y="0" width="16" height="2.9" fill="#4a7fbe"/></svg>
<svg style="left:1398px;top:69px" width="26" height="22.6" viewBox="0 0 26 22.6"><rect x="0.5" y="0.5" width="25" height="21.6" fill="#fff" stroke="#8a8a8a" stroke-width="1"/><rect x="0" y="0" width="26" height="4" fill="#727272"/><g transform="translate(0,0)"><path d="M2 7.5 H8 M10 7.5 H16 M18 7.5 H24 M2 11.5 H8 M10 11.5 H16 M18 11.5 H24 M2 15.5 H8 M10 15.5 H16 M2 19.5 H8 M10 19.5 H14" stroke="#b4b4b4" stroke-width="1"/></g></svg>
<svg style="left:1414px;top:83px" width="16" height="14" viewBox="0 0 16 14"><rect x="2" y="-0.5" width="11.8" height="11.5" fill="#f3f3f3"/><path d="M3.2 0.2 H13 Q15 0.2 15 2.2 V3.6 H12.9 V10.6 Q12.9 13.8 9.8 13.8 H2 Q0.2 13.6 0.4 11.4 Q0.6 10.4 2 10.4 H2.4 V1.2 Q2.4 0.2 3.2 0.2 Z" fill="#e98b3f"/><path d="M3.8 1.5 H11.6 V10 Q11.6 10.6 11 10.6 H3.8 Z" fill="#fff"/></svg>
<svg style="left:1454px;top:145px" width="4" height="4" viewBox="0 0 4 4"><path d="M0.3 3.4 L3.2 0.6 L6 3.4" fill="none" stroke="#555" stroke-width="1"/></svg>
<svg style="left:43.2px;top:124.05px" width="5.6" height="3.1" viewBox="0 0 5.6 3.1"><path d="M0.3 0.3 L2.8 2.8 L5.3 0.3" fill="none" stroke="#4c4c4c" stroke-width="1.15"/></svg>
<svg style="left:91.4px;top:124.05px" width="5.6" height="3.1" viewBox="0 0 5.6 3.1"><path d="M0.3 0.3 L2.8 2.8 L5.3 0.3" fill="none" stroke="#4c4c4c" stroke-width="1.15"/></svg>
<svg style="left:294.2px;top:124.05px" width="5.6" height="3.1" viewBox="0 0 5.6 3.1"><path d="M0.3 0.3 L2.8 2.8 L5.3 0.3" fill="none" stroke="#4c4c4c" stroke-width="1.15"/></svg>
<svg style="left:470.1px;top:124.05px" width="5.6" height="3.1" viewBox="0 0 5.6 3.1"><path d="M0.3 0.3 L2.8 2.8 L5.3 0.3" fill="none" stroke="#4c4c4c" stroke-width="1.15"/></svg>
<svg style="left:513.2px;top:124.05px" width="5.6" height="3.1" viewBox="0 0 5.6 3.1"><path d="M0.3 0.3 L2.8 2.8 L5.3 0.3" fill="none" stroke="#4c4c4c" stroke-width="1.15"/></svg>
<svg style="left:556.4px;top:124.05px" width="5.6" height="3.1" viewBox="0 0 5.6 3.1"><path d="M0.3 0.3 L2.8 2.8 L5.3 0.3" fill="none" stroke="#4c4c4c" stroke-width="1.15"/></svg>
<svg style="left:884.3px;top:124.05px" width="5.6" height="3.1" viewBox="0 0 5.6 3.1"><path d="M0.3 0.3 L2.8 2.8 L5.3 0.3" fill="none" stroke="#4c4c4c" stroke-width="1.15"/></svg>
<svg style="left:1410.1px;top:124.05px" width="5.6" height="3.1" viewBox="0 0 5.6 3.1"><path d="M0.3 0.3 L2.8 2.8 L5.3 0.3" fill="none" stroke="#4c4c4c" stroke-width="1.15"/></svg>
<svg style="left:181.3px;top:97.05px" width="5.6" height="3.1" viewBox="0 0 5.6 3.1"><path d="M0.3 0.3 L2.8 2.8 L5.3 0.3" fill="none" stroke="#4c4c4c" stroke-width="1.15"/></svg>
<svg style="left:190.4px;top:120.05px" width="5.6" height="3.1" viewBox="0 0 5.6 3.1"><path d="M0.3 0.3 L2.8 2.8 L5.3 0.3" fill="none" stroke="#4c4c4c" stroke-width="1.15"/></svg>
<svg style="left:424.2px;top:74.45px" width="5.6" height="3.1" viewBox="0 0 5.6 3.1"><path d="M0.3 0.3 L2.8 2.8 L5.3 0.3" fill="none" stroke="#4c4c4c" stroke-width="1.15"/></svg>
<svg style="left:397.5px;top:97.05px" width="5.6" height="3.1" viewBox="0 0 5.6 3.1"><path d="M0.3 0.3 L2.8 2.8 L5.3 0.3" fill="none" stroke="#4c4c4c" stroke-width="1.15"/></svg>
<svg style="left:1361.4px;top:74.45px" width="5.6" height="3.1" viewBox="0 0 5.6 3.1"><path d="M0.3 0.3 L2.8 2.8 L5.3 0.3" fill="none" stroke="#4c4c4c" stroke-width="1.15"/></svg>
<svg style="left:1299.4px;top:120.05px" width="5.6" height="3.1" viewBox="0 0 5.6 3.1"><path d="M0.3 0.3 L2.8 2.8 L5.3 0.3" fill="none" stroke="#4c4c4c" stroke-width="1.15"/></svg>
<svg style="left:227.5px;top:74.45px" width="5.6" height="3.1" viewBox="0 0 5.6 3.1"><path d="M0.3 0.3 L2.8 2.8 L5.3 0.3" fill="none" stroke="#4c4c4c" stroke-width="1.15"/></svg>
<svg style="left:744.3px;top:74.8px" width="6" height="3" viewBox="0 0 6 3"><path d="M0 0 L6 0 L3 3 Z" fill="#606060"/></svg>
<svg style="left:744.3px;top:97.8px" width="6" height="3" viewBox="0 0 6 3"><path d="M0 0 L6 0 L3 3 Z" fill="#606060"/></svg>
<svg style="left:744.3px;top:120.8px" width="6" height="3" viewBox="0 0 6 3"><path d="M0 0 L6 0 L3 3 Z" fill="#606060"/></svg>
<svg style="left:855.5px;top:97.8px" width="6" height="3" viewBox="0 0 6 3"><path d="M0 0 L6 0 L3 3 Z" fill="#606060"/></svg>
<svg style="left:1173px;top:74.8px" width="6" height="3" viewBox="0 0 6 3"><path d="M0 0 L6 0 L3 3 Z" fill="#b4b4b4"/></svg>
<svg style="left:1173px;top:97.8px" width="6" height="3" viewBox="0 0 6 3"><path d="M0 0 L6 0 L3 3 Z" fill="#b4b4b4"/></svg>
<svg style="left:265.5px;top:181px" width="7" height="4" viewBox="0 0 7 4"><path d="M0 0 L7 0 L3.5 4 Z" fill="#2e7d32"/></svg>
<svg style="left:340.9px;top:181px" width="7" height="4" viewBox="0 0 7 4"><path d="M0 0 L7 0 L3.5 4 Z" fill="#505050"/></svg>
<svg style="left:439.5px;top:181px" width="7" height="4" viewBox="0 0 7 4"><path d="M0 0 L7 0 L3.5 4 Z" fill="#505050"/></svg>
<svg style="left:544.9px;top:181px" width="7" height="4" viewBox="0 0 7 4"><path d="M0 0 L7 0 L3.5 4 Z" fill="#505050"/></svg>
<svg style="left:632.1px;top:181px" width="7" height="4" viewBox="0 0 7 4"><path d="M0 0 L7 0 L3.5 4 Z" fill="#505050"/></svg>
<div id="tx">
<span class="t" style="left:20.4px;top:38.0px;font-size:12px;line-height:16px;color:#ffffff;font-weight:400;letter-spacing:-0.386px">File</span>
<span class="t" style="left:73.0px;top:38.5px;font-size:12px;line-height:16px;color:#ffffff;font-weight:400;letter-spacing:-0.622px">Task</span>
<span class="t" style="left:122.0px;top:38.5px;font-size:12px;line-height:16px;color:#ffffff;font-weight:400;letter-spacing:-0.420px">Resource</span>
<span class="t" style="left:197.0px;top:38.5px;font-size:12px;line-height:16px;color:#ffffff;font-weight:400;letter-spacing:-0.172px">Report</span>
<span class="t" style="left:259.0px;top:38.5px;font-size:12px;line-height:16px;color:#ffffff;font-weight:400;letter-spacing:-0.051px">Project</span>
<span class="t" style="left:323.0px;top:38.5px;font-size:12px;line-height:16px;color:#2e7230;font-weight:400;letter-spacing:-0.199px">View</span>
<span class="t" style="left:375.0px;top:38.5px;font-size:12px;line-height:16px;color:#ffffff;font-weight:400;letter-spacing:0.078px">Help</span>
<span class="t" style="left:429.5px;top:38.5px;font-size:12px;line-height:16px;color:#ffffff;font-weight:400;letter-spacing:-0.104px">Gantt Chart Format</span>
<span class="t" style="left:586.4px;top:38.0px;font-size:12px;line-height:16px;color:#ffffff;font-weight:400;letter-spacing:0.049px">Tell me what you want to do</span>
<span class="t" style="left:437.5px;top:7.8px;font-size:11.5px;line-height:15.5px;color:#d4e2d4;font-weight:400;letter-spacing:0.013px">Gantt Chart Tools</span>
<span class="t" style="left:567.5px;top:7.0px;font-size:12px;line-height:16px;color:#ffffff;font-weight:400;letter-spacing:-0.106px">Implementation Project Plan - Exec Sponsor  -  Project Standard</span>
<span class="t" style="left:16.5px;top:101.5px;font-size:12px;line-height:16px;color:#222222;font-weight:400;letter-spacing:-0.172px">Gantt</span>
<span class="t" style="left:10.5px;top:117.5px;font-size:12px;line-height:16px;color:#222222;font-weight:400;letter-spacing:-0.169px">Chart</span>
<span class="t" style="left:66.5px;top:101.5px;font-size:12px;line-height:16px;color:#222222;font-weight:400;letter-spacing:-0.722px">Task</span>
<span class="t" style="left:56.5px;top:117.5px;font-size:12px;line-height:16px;color:#222222;font-weight:400;letter-spacing:-0.778px">Usage</span>
<span class="t" style="left:257.0px;top:101.5px;font-size:12px;line-height:16px;color:#222222;font-weight:400;letter-spacing:-0.420px">Resource</span>
<span class="t" style="left:261.0px;top:117.5px;font-size:12px;line-height:16px;color:#222222;font-weight:400;letter-spacing:-0.352px">Sheet</span>
<span class="t" style="left:462.4px;top:101.5px;font-size:12px;line-height:16px;color:#222222;font-weight:400;letter-spacing:-0.404px">Sort</span>
<span class="t" style="left:496.6px;top:101.5px;font-size:12px;line-height:16px;color:#222222;font-weight:400;letter-spacing:0.053px">Outline</span>
<span class="t" style="left:544.0px;top:101.5px;font-size:12px;line-height:16px;color:#222222;font-weight:400;letter-spacing:-0.665px">Tables</span>
<span class="t" style="left:871.0px;top:101.5px;font-size:12px;line-height:16px;color:#222222;font-weight:400;letter-spacing:0.253px">Zoom</span>
<span class="t" style="left:914.5px;top:101.5px;font-size:12px;line-height:16px;color:#222222;font-weight:400;letter-spacing:-0.227px">Entire</span>
<span class="t" style="left:910.5px;top:117.5px;font-size:12px;line-height:16px;color:#222222;font-weight:400;letter-spacing:-0.123px">Project</span>
<span class="t" style="left:952.0px;top:101.5px;font-size:12px;line-height:16px;color:#b4b4b4;font-weight:400;letter-spacing:-0.375px">Selected</span>
<span class="t" style="left:961.0px;top:117.5px;font-size:12px;line-height:16px;color:#b4b4b4;font-weight:400;letter-spacing:-0.738px">Tasks</span>
<span class="t" style="left:1211.6px;top:101.5px;font-size:12px;line-height:16px;color:#222222;font-weight:400;letter-spacing:-0.372px">New</span>
<span class="t" style="left:1201.6px;top:117.5px;font-size:12px;line-height:16px;color:#222222;font-weight:400;letter-spacing:0.035px">Window</span>
<span class="t" style="left:1393.5px;top:101.5px;font-size:12px;line-height:16px;color:#222222;font-weight:400;letter-spacing:-0.174px">Macros</span>
<span class="t" style="left:123.5px;top:68.0px;font-size:12px;line-height:16px;color:#222222;font-weight:400;letter-spacing:-0.040px">Network Diagram</span>
<span class="t" style="left:123.5px;top:91.0px;font-size:12px;line-height:16px;color:#222222;font-weight:400;letter-spacing:-0.275px">Calendar</span>
<span class="t" style="left:123.5px;top:113.5px;font-size:12px;line-height:16px;color:#222222;font-weight:400;letter-spacing:-0.258px">Other Views</span>
<span class="t" style="left:330.6px;top:68.0px;font-size:12px;line-height:16px;color:#222222;font-weight:400;letter-spacing:-0.499px">Resource Usage</span>
<span class="t" style="left:330.6px;top:91.0px;font-size:12px;line-height:16px;color:#222222;font-weight:400;letter-spacing:-0.249px">Other Views</span>
<span class="t" style="left:602.5px;top:68.0px;font-size:12px;line-height:16px;color:#222222;font-weight:400;letter-spacing:0.147px">Highlight:</span>
<span class="t" style="left:602.5px;top:91.0px;font-size:12px;line-height:16px;color:#222222;font-weight:400;letter-spacing:-0.357px">Filter:</span>
<span class="t" style="left:602.5px;top:113.5px;font-size:12px;line-height:16px;color:#222222;font-weight:400;letter-spacing:-0.134px">Group by:</span>
<span class="t" style="left:663.8px;top:68.0px;font-size:12px;line-height:16px;color:#222222;font-weight:400;letter-spacing:0.275px">[No Highlight]</span>
<span class="t" style="left:663.8px;top:91.0px;font-size:12px;line-height:16px;color:#222222;font-weight:400;letter-spacing:-0.020px">[No Filter]</span>
<span class="t" style="left:663.8px;top:113.5px;font-size:12px;line-height:16px;color:#222222;font-weight:400;letter-spacing:0.020px">[No Group]</span>
<span class="t" style="left:772.4px;top:68.0px;font-size:12px;line-height:16px;color:#222222;font-weight:400;letter-spacing:-0.468px">Timescale:</span>
<span class="t" style="left:774.6px;top:91.0px;font-size:12px;line-height:16px;color:#222222;font-weight:400;letter-spacing:-0.364px">[2] Days</span>
<span class="t" style="left:1036.7px;top:68.5px;font-size:12px;line-height:16px;color:#222222;font-weight:400;letter-spacing:-0.076px">Timeline</span>
<span class="t" style="left:1036.7px;top:91.5px;font-size:12px;line-height:16px;color:#222222;font-weight:400;letter-spacing:-0.384px">Details</span>
<span class="t" style="left:1270.5px;top:68.0px;font-size:12px;line-height:16px;color:#222222;font-weight:400;letter-spacing:-0.076px">Switch Windows</span>
<span class="t" style="left:1270.5px;top:91.0px;font-size:12px;line-height:16px;color:#222222;font-weight:400;letter-spacing:-0.109px">Arrange All</span>
<span class="t" style="left:1270.5px;top:113.5px;font-size:12px;line-height:16px;color:#222222;font-weight:400;letter-spacing:-0.047px">Hide</span>
<span class="t" style="left:96.0px;top:138.1px;font-size:11.5px;line-height:15.5px;color:#303030;font-weight:400;letter-spacing:-0.331px">Task Views</span>
<span class="t" style="left:305.5px;top:138.1px;font-size:11.5px;line-height:15.5px;color:#303030;font-weight:400;letter-spacing:-0.264px">Resource Views</span>
<span class="t" style="left:591.4px;top:138.1px;font-size:11.5px;line-height:15.5px;color:#303030;font-weight:400;letter-spacing:-0.299px">Data</span>
<span class="t" style="left:870.0px;top:138.1px;font-size:11.5px;line-height:15.5px;color:#303030;font-weight:400;letter-spacing:-0.227px">Zoom</span>
<span class="t" style="left:1073.4px;top:138.1px;font-size:11.5px;line-height:15.5px;color:#303030;font-weight:400;letter-spacing:0.030px">Split View</span>
<span class="t" style="left:1265.6px;top:138.1px;font-size:11.5px;line-height:15.5px;color:#303030;font-weight:400;letter-spacing:0.416px">Window</span>
<span class="t" style="left:1394.6px;top:138.1px;font-size:11.5px;line-height:15.5px;color:#303030;font-weight:400;letter-spacing:-0.267px">Macros</span>
<span class="t" style="left:66.4px;top:173.7px;font-size:10.67px;line-height:14.67px;color:#3a7e34;font-weight:700;letter-spacing:0.513px">Task Name</span>
<span class="t" style="left:289.3px;top:173.7px;font-size:10.67px;line-height:14.67px;color:#5f5f5f;font-weight:400;letter-spacing:-0.198px">Duration</span>
<span class="t" style="left:385.0px;top:173.7px;font-size:10.67px;line-height:14.67px;color:#5f5f5f;font-weight:400;letter-spacing:0.097px">Start</span>
<span class="t" style="left:484.0px;top:173.7px;font-size:10.67px;line-height:14.67px;color:#5f5f5f;font-weight:400;letter-spacing:-0.140px">Finish</span>
<span class="t" style="left:564.7px;top:173.7px;font-size:10.67px;line-height:14.67px;color:#5f5f5f;font-weight:400;letter-spacing:-0.215px">% Complete</span>
<span class="t" style="left:37.0px;top:193.7px;font-size:10.67px;line-height:14.67px;color:#6a6a6a;font-weight:400;letter-spacing:-0.030px">25</span>
<span class="t" style="left:109.0px;top:193.7px;font-size:10.67px;line-height:14.67px;color:#000;font-weight:400;letter-spacing:0.118px">Executive Review</span>
<span class="t" style="left:319.4px;top:193.7px;font-size:10.67px;line-height:14.67px;color:#000;font-weight:400;letter-spacing:0.116px">0 days</span>
<span class="t" style="left:390.0px;top:193.7px;font-size:10.67px;line-height:14.67px;color:#000;font-weight:400;letter-spacing:-0.003px">Wed 3/24/21</span>
<span class="t" style="left:495.3px;top:193.7px;font-size:10.67px;line-height:14.67px;color:#000;font-weight:400;letter-spacing:-0.049px">Wed 3/24/21</span>
<span class="t" style="left:561.2px;top:193.7px;font-size:10.67px;line-height:14.67px;color:#000;font-weight:400;letter-spacing:-0.203px">0%</span>
<span class="t" style="left:37.0px;top:227.7px;font-size:10.67px;line-height:14.67px;color:#6a6a6a;font-weight:400;letter-spacing:-0.030px">26</span>
<span class="t" style="left:109.0px;top:227.7px;font-size:10.67px;line-height:14.67px;color:#000;font-weight:400;letter-spacing:-0.017px">End User Training</span>
<span class="t" style="left:319.4px;top:227.7px;font-size:10.67px;line-height:14.67px;color:#000;font-weight:400;letter-spacing:0.116px">4 days</span>
<span class="t" style="left:390.0px;top:227.7px;font-size:10.67px;line-height:14.67px;color:#000;font-weight:400;letter-spacing:-0.003px">Wed 3/24/21</span>
<span class="t" style="left:497.3px;top:227.7px;font-size:10.67px;line-height:14.67px;color:#000;font-weight:400;letter-spacing:-0.141px">Mon 3/29/21</span>
<span class="t" style="left:561.2px;top:227.7px;font-size:10.67px;line-height:14.67px;color:#000;font-weight:400;letter-spacing:-0.203px">0%</span>
<span class="t" style="left:37.0px;top:261.7px;font-size:10.67px;line-height:14.67px;color:#6a6a6a;font-weight:400;letter-spacing:-0.030px">27</span>
<span class="t" style="left:109.0px;top:261.7px;font-size:10.67px;line-height:14.67px;color:#000;font-weight:400;letter-spacing:0.324px">Sign-Off</span>
<span class="t" style="left:319.4px;top:261.7px;font-size:10.67px;line-height:14.67px;color:#000;font-weight:400;letter-spacing:0.116px">0 days</span>
<span class="t" style="left:392.0px;top:261.7px;font-size:10.67px;line-height:14.67px;color:#000;font-weight:400;letter-spacing:-0.095px">Mon 3/29/21</span>
<span class="t" style="left:497.3px;top:261.7px;font-size:10.67px;line-height:14.67px;color:#000;font-weight:400;letter-spacing:-0.141px">Mon 3/29/21</span>
<span class="t" style="left:561.2px;top:261.7px;font-size:10.67px;line-height:14.67px;color:#000;font-weight:400;letter-spacing:-0.203px">0%</span>
<span class="t" style="left:695.3px;top:173.0px;font-size:10.67px;line-height:14.67px;color:#5f5f5f;font-weight:400;letter-spacing:-0.030px">10</span>
<span class="t" style="left:729.3px;top:173.0px;font-size:10.67px;line-height:14.67px;color:#5f5f5f;font-weight:400;letter-spacing:-0.030px">12</span>
<span class="t" style="left:763.3px;top:173.0px;font-size:10.67px;line-height:14.67px;color:#5f5f5f;font-weight:400;letter-spacing:-0.030px">14</span>
<span class="t" style="left:797.3px;top:173.0px;font-size:10.67px;line-height:14.67px;color:#5f5f5f;font-weight:400;letter-spacing:-0.030px">16</span>
<span class="t" style="left:831.3px;top:173.0px;font-size:10.67px;line-height:14.67px;color:#5f5f5f;font-weight:400;letter-spacing:-0.030px">18</span>
<span class="t" style="left:865.3px;top:173.0px;font-size:10.67px;line-height:14.67px;color:#5f5f5f;font-weight:400;letter-spacing:-0.030px">20</span>
<span class="t" style="left:899.3px;top:173.0px;font-size:10.67px;line-height:14.67px;color:#5f5f5f;font-weight:400;letter-spacing:-0.030px">22</span>
<span class="t" style="left:933.3px;top:173.0px;font-size:10.67px;line-height:14.67px;color:#5f5f5f;font-weight:400;letter-spacing:-0.030px">24</span>
<span class="t" style="left:967.3px;top:173.0px;font-size:10.67px;line-height:14.67px;color:#5f5f5f;font-weight:400;letter-spacing:-0.030px">26</span>
<span class="t" style="left:1001.3px;top:173.0px;font-size:10.67px;line-height:14.67px;color:#5f5f5f;font-weight:400;letter-spacing:-0.030px">28</span>
<span class="t" style="left:1035.3px;top:173.0px;font-size:10.67px;line-height:14.67px;color:#5f5f5f;font-weight:400;letter-spacing:-0.030px">30</span>
<span class="t" style="left:1072.2px;top:173.0px;font-size:10.67px;line-height:14.67px;color:#5f5f5f;font-weight:400;letter-spacing:-0.037px">1</span>
<span class="t" style="left:1106.2px;top:173.0px;font-size:10.67px;line-height:14.67px;color:#5f5f5f;font-weight:400;letter-spacing:-0.037px">3</span>
<span class="t" style="left:1140.2px;top:173.0px;font-size:10.67px;line-height:14.67px;color:#5f5f5f;font-weight:400;letter-spacing:-0.037px">5</span>
<span class="t" style="left:1174.2px;top:173.0px;font-size:10.67px;line-height:14.67px;color:#5f5f5f;font-weight:400;letter-spacing:-0.037px">7</span>
<span class="t" style="left:1208.2px;top:173.0px;font-size:10.67px;line-height:14.67px;color:#5f5f5f;font-weight:400;letter-spacing:-0.037px">9</span>
<span class="t" style="left:1239.3px;top:173.0px;font-size:10.67px;line-height:14.67px;color:#5f5f5f;font-weight:400;letter-spacing:0.369px">11</span>
<span class="t" style="left:1273.3px;top:173.0px;font-size:10.67px;line-height:14.67px;color:#5f5f5f;font-weight:400;letter-spacing:-0.030px">13</span>
<span class="t" style="left:1307.3px;top:173.0px;font-size:10.67px;line-height:14.67px;color:#5f5f5f;font-weight:400;letter-spacing:-0.030px">15</span>
<span class="t" style="left:1341.3px;top:173.0px;font-size:10.67px;line-height:14.67px;color:#5f5f5f;font-weight:400;letter-spacing:-0.030px">17</span>
<span class="t" style="left:1375.3px;top:173.0px;font-size:10.67px;line-height:14.67px;color:#5f5f5f;font-weight:400;letter-spacing:-0.030px">19</span>
<span class="t" style="left:1409.3px;top:173.0px;font-size:10.67px;line-height:14.67px;color:#5f5f5f;font-weight:400;letter-spacing:-0.030px">21</span>
<span class="t" style="left:1443.3px;top:173.0px;font-size:10.67px;line-height:14.67px;color:#5f5f5f;font-weight:400;letter-spacing:-0.030px">23</span>
<span class="t" style="left:1059.5px;top:155.7px;font-size:10.67px;line-height:14.67px;color:#5f5f5f;font-weight:400;letter-spacing:0.037px">February 2021</span>
</div>
<div class="b" style="left:308px;top:28px;width:58px;height:35px;border:5px solid #d24726;"></div>
<div class="b" style="left:3px;top:56px;width:57px;height:80px;border:5px solid #d24726;"></div>
<div class="b" style="left:26px;top:283px;width:269px;height:55px;border:5px solid #d24726;"></div>
</body></html>
